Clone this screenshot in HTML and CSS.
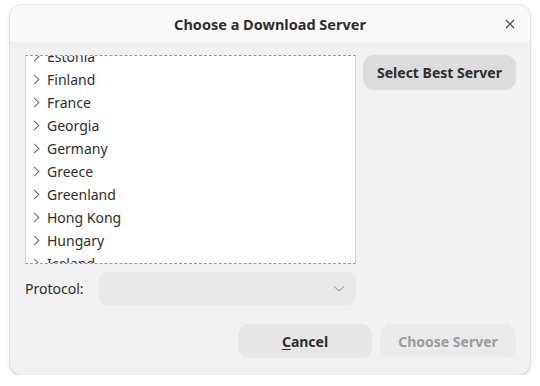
FILE: index.html
```html
<!DOCTYPE html>
<html lang="en">
<head>
    <meta charset="UTF-8">
    <title>Choose a Download Server</title>
    <link rel="stylesheet" href="styles.css">
</head>
<body>
    <div class="dialog">
        <div class="headerbar">
            <h1>Choose a Download Server</h1>
            <button class="close" aria-label="Close">
                <svg width="10" height="10" viewBox="0 0 10 10"><path d="M1 1L9 9M9 1L1 9" stroke="#444" stroke-width="1.2"/></svg>
            </button>
        </div>
        <div class="content">
            <div class="top-row">
                <div class="server-list">
                    <ul class="tree">
                        <li>Estonia</li>
                        <li>Finland</li>
                        <li>France</li>
                        <li>Georgia</li>
                        <li>Germany</li>
                        <li>Greece</li>
                        <li>Greenland</li>
                        <li>Hong Kong</li>
                        <li>Hungary</li>
                        <li>Iceland</li>
                    </ul>
                </div>
                <button class="btn btn-best">Select Best Server</button>
            </div>
            <div class="protocol-row">
                <label>Protocol:</label>
                <div class="combo">
                    <svg width="12" height="8" viewBox="0 0 12 8"><path d="M1 1.5L6 6L11 1.5" fill="none" stroke="#8a8a8a" stroke-width="1"/></svg>
                </div>
            </div>
            <div class="actions">
                <button class="btn btn-cancel"><u>C</u>ancel</button>
                <button class="btn btn-choose" disabled>Choose Server</button>
            </div>
        </div>
    </div>
</body>
</html>
```

FILE: styles.css
```css
:root {
    --header-bg: #fafafa;
    --body-bg: #f1f1f1;
    --text-color: #2e2e2e;
}
body {
    margin: 0;
    padding: 5px 10px 0 10px;
    background: #ffffff;
    font-family: "Noto Sans", sans-serif;
    font-size: 14px;
    color: var(--text-color);
}
.dialog {
    width: 520px;
    height: 370px;
    border-radius: 12px;
    overflow: hidden;
    background: var(--body-bg);
    box-shadow: 0 0 0 1px rgba(0, 0, 0, 0.08), 0 2px 4px rgba(0, 0, 0, 0.12);
    display: flex;
    flex-direction: column;
}
.headerbar {
    height: 37px;
    background: var(--header-bg);
    display: flex;
    align-items: center;
    justify-content: center;
    position: relative;
}
.headerbar h1 {
    margin: 0;
    font-size: 14.5px;
    font-weight: bold;
}
.close {
    position: absolute;
    right: 10px;
    top: 9px;
    width: 20px;
    height: 20px;
    border: none;
    background: none;
    padding: 0;
    display: flex;
    align-items: center;
    justify-content: center;
}
.content {
    flex: 1;
    padding: 13px 14px 0 15px;
    display: flex;
    flex-direction: column;
}
.top-row {
    display: flex;
    gap: 7px;
    align-items: flex-start;
}
.server-list {
    width: 329px;
    height: 207px;
    background: #fff;
    border: 1px solid #d6d6d6;
    border-top: 1px dashed #9a9a9a;
    border-bottom: 1px dashed #9a9a9a;
    overflow: hidden;
}
.tree {
    list-style: none;
    margin: -11px 0 0 0;
    padding: 0;
}
.tree li {
    height: 23px;
    line-height: 23px;
    padding-left: 21px;
    position: relative;
}
.tree li::before {
    content: '';
    position: absolute;
    left: 5px;
    top: 8px;
    width: 6px;
    height: 6px;
    border-right: 1px solid #6a6a6a;
    border-top: 1px solid #6a6a6a;
    transform: rotate(45deg);
}
.btn {
    font-family: inherit;
    font-size: 14px;
    font-weight: bold;
    color: var(--text-color);
    border: none;
    border-radius: 11px;
    padding: 0;
}
.btn-best {
    width: 153px;
    height: 35px;
    background: #dcdcdc;
}
.protocol-row {
    display: flex;
    align-items: center;
    gap: 12px;
    margin-top: 8px;
}
.protocol-row label {
    width: 62px;
}
.combo {
    width: 257px;
    height: 33px;
    border-radius: 8px;
    background: #e8e8e8;
    display: flex;
    align-items: center;
    justify-content: flex-end;
    padding-right: 11px;
    box-sizing: border-box;
}
.actions {
    display: flex;
    justify-content: flex-end;
    gap: 8px;
    margin-top: 19px;
}
.btn-cancel {
    width: 134px;
    height: 34px;
    background: #e6e6e6;
}
.btn-cancel u {
    text-decoration-thickness: 1px;
    text-underline-offset: 2px;
}
.btn-choose {
    width: 136px;
    height: 34px;
    background: #eaeaea;
    color: #9c9c9c;
}
```
